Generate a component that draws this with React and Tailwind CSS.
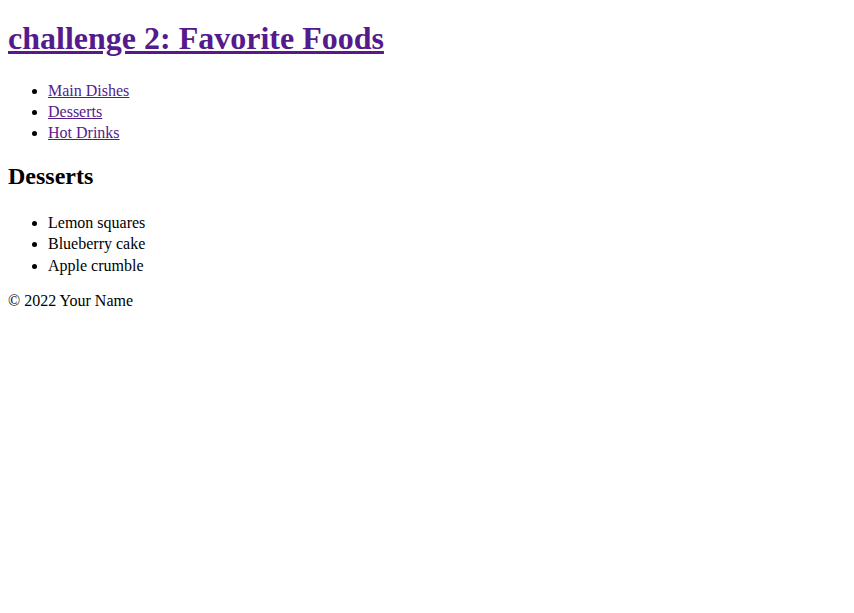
import React from 'react';

const navLinks = ['Main Dishes', 'Desserts', 'Hot Drinks'];
const desserts = ['Lemon squares', 'Blueberry cake', 'Apple crumble'];

export default function App() {
  return (
    <div className="px-2 bg-white text-black font-['Liberation_Serif',serif] text-base">
      <header>
        <h1 className="mt-[20px] mb-[23px] text-[32px] leading-[37px] font-bold">
          <a href="#" className="text-[#551a8b] underline">challenge 2: Favorite Foods</a>
        </h1>
        <nav>
          <ul className="list-disc pl-10 leading-[21px]">
            {navLinks.map(link => (
              <li key={link}>
                <a href="#" className="text-[#551a8b] underline">{link}</a>
              </li>
            ))}
          </ul>
        </nav>
      </header>

      <main>
        <h2 className="mt-[19px] mb-[21px] text-2xl leading-[29px] font-bold">Desserts</h2>
        <ul className="list-disc pl-10 leading-[21.3px]">
          {desserts.map(item => <li key={item}>{item}</li>)}
        </ul>
      </main>

      <footer className="mt-[13px]">
        <p>© 2022 Your Name</p>
      </footer>
    </div>
  );
}
